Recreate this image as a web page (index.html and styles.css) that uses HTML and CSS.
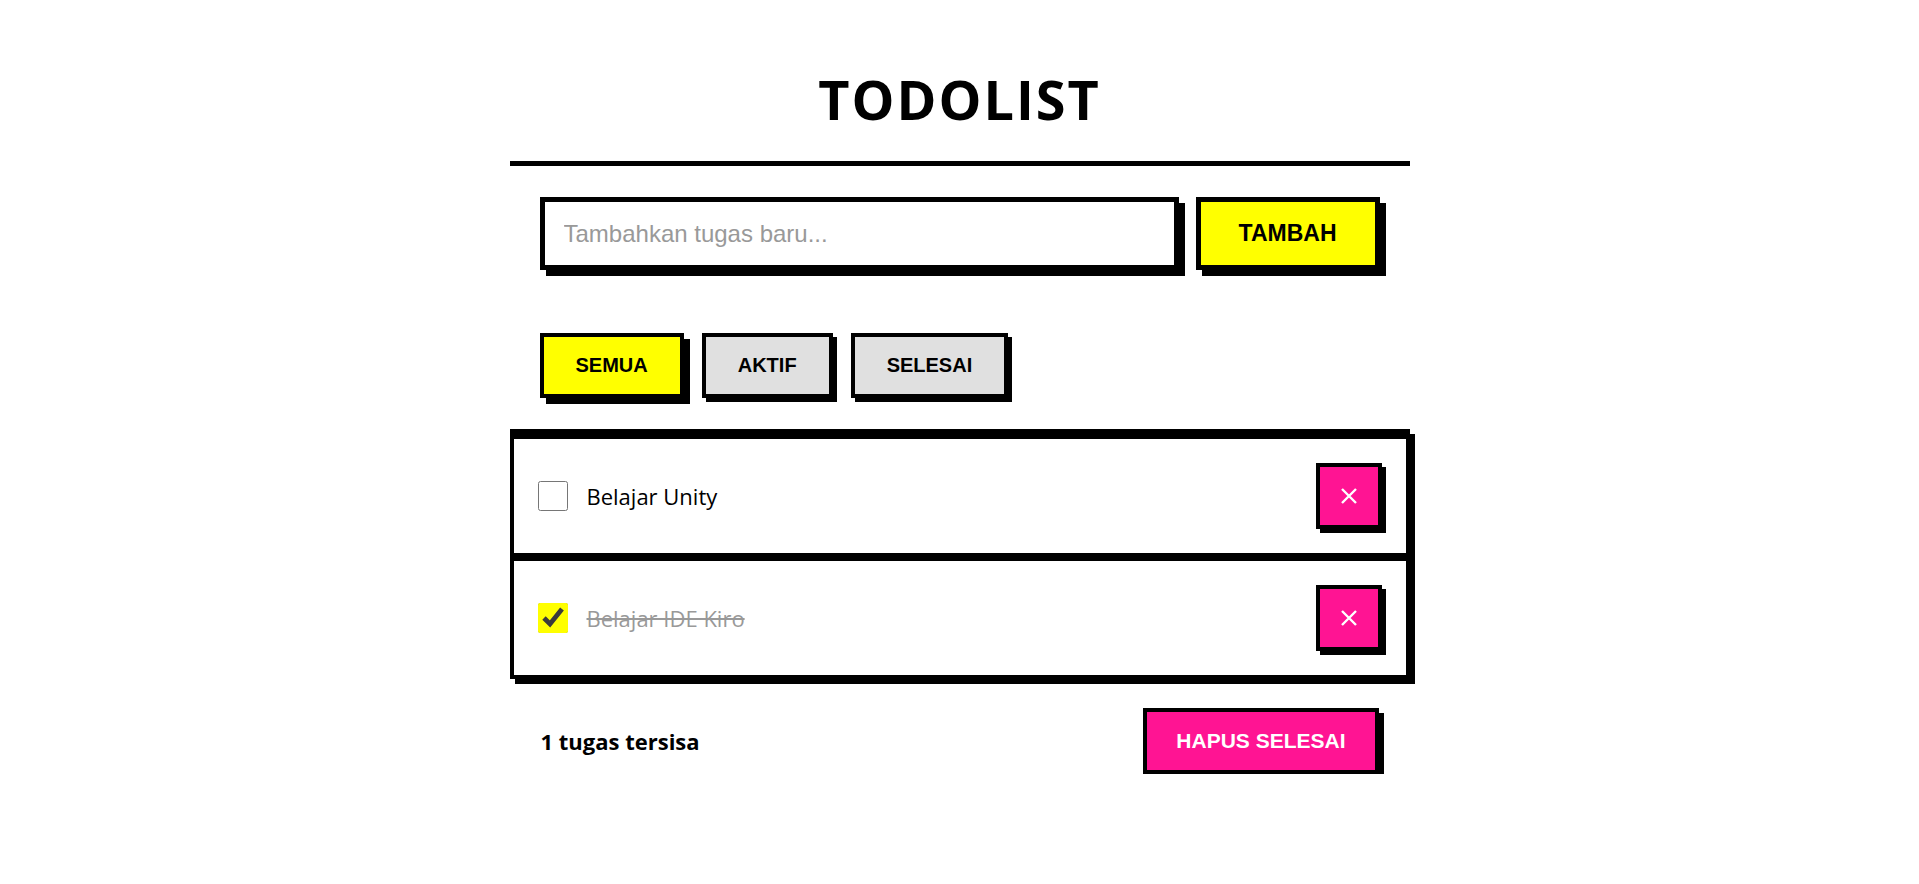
FILE: index.html
```html
<!DOCTYPE html>
<html lang="id">
<head>
<meta charset="utf-8">
<title>Todolist</title>
<link rel="stylesheet" href="styles.css">
</head>
<body>
<div class="app">
  <header class="app-header">
    <h1 class="title">TODOLIST</h1>
  </header>

  <form class="add-form">
    <input class="add-input" type="text" placeholder="Tambahkan tugas baru...">
    <button class="add-btn" type="button">TAMBAH</button>
  </form>

  <div class="filters">
    <button class="filter-btn is-active" type="button">SEMUA</button>
    <button class="filter-btn" type="button">AKTIF</button>
    <button class="filter-btn" type="button">SELESAI</button>
  </div>

  <ul class="todo-list">
    <li class="todo-item">
      <input class="todo-check" type="checkbox">
      <span class="todo-text">Belajar Unity</span>
      <button class="delete-btn" type="button" aria-label="Hapus">
        <svg width="18" height="18" viewBox="0 0 18 18"><path d="M2 2L16 16M16 2L2 16" stroke="#fff" stroke-width="2.4" stroke-linecap="butt"/></svg>
      </button>
    </li>
    <li class="todo-item is-done">
      <input class="todo-check" type="checkbox" checked>
      <span class="todo-text">Belajar IDE Kiro</span>
      <button class="delete-btn" type="button" aria-label="Hapus">
        <svg width="18" height="18" viewBox="0 0 18 18"><path d="M2 2L16 16M16 2L2 16" stroke="#fff" stroke-width="2.4" stroke-linecap="butt"/></svg>
      </button>
    </li>
  </ul>

  <div class="footer">
    <span class="count">1 tugas tersisa</span>
    <button class="clear-btn" type="button">HAPUS SELESAI</button>
  </div>
</div>
</body>
</html>
```

FILE: styles.css
```css
body {
  margin: 0;
  background: #fff;
  color: #000;
  font-family: "Open Sans", "Noto Sans", sans-serif;
}

.app {
  width: 900px;
  margin: 0 auto;
  padding-top: 67px;
}

.title {
  margin: 0;
  padding-bottom: 30px;
  border-bottom: 5px solid #000;
  font-size: 54px;
  line-height: 64px;
  font-weight: 700;
  letter-spacing: 2px;
  text-align: center;
}

/* input row */
.add-form {
  display: flex;
  gap: 17px;
  margin: 0;
  padding: 31px 30px 0;
}

.add-input {
  flex: 1;
  box-sizing: border-box;
  height: 73px;
  margin: 0;
  padding: 0 19px;
  border: 5px solid #000;
  border-radius: 0;
  box-shadow: 6px 6px 0 #000;
  font-family: "Liberation Sans", Arial, sans-serif;
  font-size: 24px;
  outline: none;
}

.add-input::placeholder {
  color: #999;
}

.add-btn {
  box-sizing: border-box;
  height: 73px;
  margin: 0;
  padding: 0 38px;
  border: 5px solid #000;
  border-radius: 0;
  background: #ff0;
  box-shadow: 6px 6px 0 #000;
  color: #000;
  font-family: "Liberation Sans", Arial, sans-serif;
  font-size: 23px;
  font-weight: 700;
}

/* filter buttons */
.filters {
  display: flex;
  gap: 18px;
  margin-top: 63px;
  padding: 0 30px;
}

.filter-btn {
  box-sizing: border-box;
  height: 65px;
  margin: 0;
  padding: 0 32px;
  border: 4px solid #000;
  border-radius: 0;
  background: #e0e0e0;
  box-shadow: 4px 4px 0 #000;
  color: #000;
  font-family: "Liberation Sans", Arial, sans-serif;
  font-size: 20px;
  font-weight: 700;
}

.filter-btn.is-active {
  background: #ff0;
  box-shadow: 6px 6px 0 #000;
}

/* task list */
.todo-list {
  list-style: none;
  margin: 31px 0 0;
  padding: 0;
  border: 4px solid #000;
  border-top-width: 10px;
  box-shadow: 5px 5px 0 #000;
}

.todo-item {
  display: flex;
  align-items: center;
  padding: 24px;
}

.todo-item + .todo-item {
  border-top: 8px solid #000;
}

.todo-check {
  width: 30px;
  height: 30px;
  margin: 0 19px 0 0;
  accent-color: #ff0;
}

.todo-text {
  flex: 1;
  font-size: 22px;
}

.is-done .todo-text {
  color: #999;
  text-decoration: line-through;
}

.delete-btn {
  box-sizing: border-box;
  display: grid;
  place-items: center;
  width: 66px;
  height: 66px;
  margin: 0;
  padding: 0;
  border: 4px solid #000;
  border-radius: 0;
  background: #ff1493;
  box-shadow: 4px 4px 0 #000;
}

/* footer */
.footer {
  display: flex;
  justify-content: space-between;
  align-items: center;
  margin-top: 29px;
  padding: 0 31px;
}

.count {
  font-size: 22px;
  font-weight: 700;
}

.clear-btn {
  box-sizing: border-box;
  height: 66px;
  margin: 0;
  padding: 0 29px;
  border: 4px solid #000;
  border-radius: 0;
  background: #ff1493;
  box-shadow: 5px 5px 0 #000;
  color: #fff;
  font-family: "Liberation Sans", Arial, sans-serif;
  font-size: 21px;
  font-weight: 700;
}
```
